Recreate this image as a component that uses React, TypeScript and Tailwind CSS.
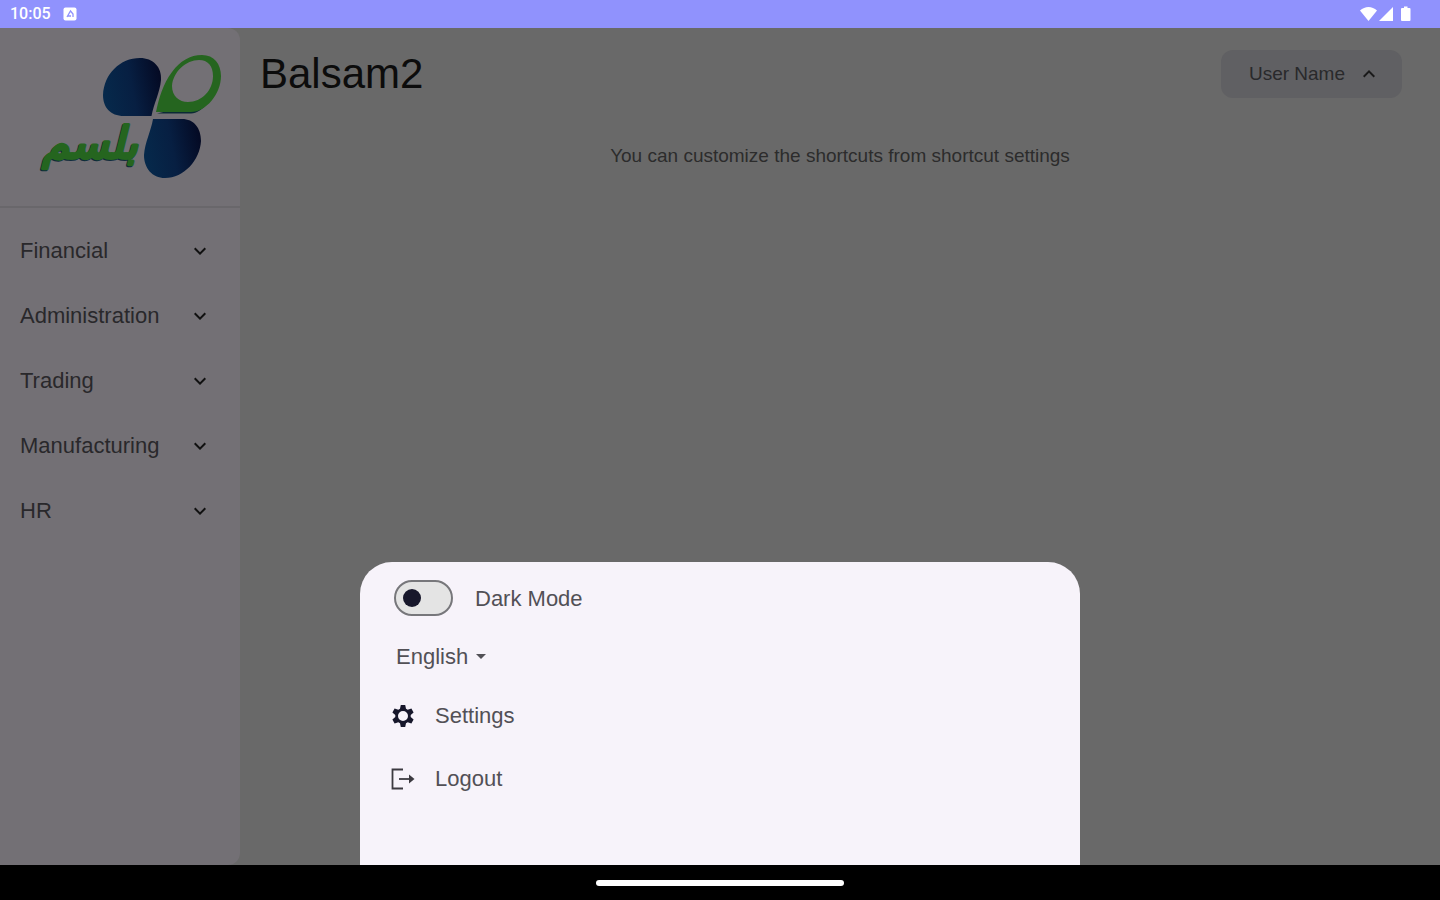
import * as React from 'react';
import { MdArrowDropDown, MdExpandLess, MdExpandMore } from 'react-icons/md';

const MENU = ['Financial', 'Administration', 'Trading', 'Manufacturing', 'HR'];

function StatusBar() {
  return (
    <div className="flex h-7 flex-none items-center bg-[#9092fd] pr-7 pl-2.5 text-white">
      <span className="font-[Roboto,sans-serif] text-base font-medium">10:05</span>
      <svg viewBox="0 0 14 14" className="ml-3 size-3.5" aria-hidden="true">
        <rect x="0.5" y="0.5" width="13" height="13" rx="2" fill="#fff" />
        <path d="M4 10 L7.5 4 L10 7 V10 M4.5 9 H8" fill="none" stroke="#9092fd" strokeWidth="1.3" />
      </svg>
      <svg viewBox="0 0 52 16" className="ml-auto h-4 w-[52px]" fill="#fff" aria-hidden="true">
        <path d="M0 4.5 C5 -0.2 12 -0.2 17 4.5 L8.5 15 Z" />
        <path d="M33 1 V15 H19 Z" />
        <path d="M42 2 h2 V0.5 h3.5 V2 h2 q1 0 1 1 V14 q0 1 -1 1 H42 q-1 0 -1 -1 V3 q0 -1 1 -1 Z" />
      </svg>
    </div>
  );
}

function Logo() {
  return (
    <svg viewBox="39 52 184 128" className="h-32 w-[184px]" role="img" aria-label="بلسم">
      <defs>
        <linearGradient id="leaf" x1="0" y1="0.6" x2="1" y2="0.4">
          <stop offset="0" stopColor="#06294b" />
          <stop offset="0.5" stopColor="#071f42" />
          <stop offset="1" stopColor="#040a24" />
        </linearGradient>
      </defs>
      <path
        d="M151.5 116 H124 C110 116 103 107 103 95 C104 74 120 58 140 58 C153 58 162 67 161 80 C160 92 154 103 151.5 116 Z"
        fill="url(#leaf)"
      />
      <path
        d="M153 119 H182 C194 119 201 128 201 141 C200 160 184 178 165 178 C152 178 144 168 144 155 C145 142 151 131 153 119 Z"
        fill="url(#leaf)"
      />
      <path d="M157 113.5 L191 113.5 C197 113 201 110 205 106 L180 108 Z" fill="#0a2a35" />
      <path
        fillRule="evenodd"
        fill="#25651f"
        d="M156 112 C159 98 163 84 172 72 C180 61 190 55 202 55 C214 55 221 64 221 76 C221 94 206 112 191 112 Z M199 60 C186 60 173 72 172 86 C172 96 179 102 188 102 C202 102 213 90 213 76 C213 66 208 60 199 60 Z"
      />
      <g
        direction="rtl"
        textAnchor="middle"
        strokeWidth="2"
        strokeLinejoin="round"
        className="font-['DejaVu_Sans',sans-serif] text-[44px] font-bold italic"
      >
        <text x="89" y="159" fill="#0d2a3c" stroke="#0d2a3c">بلسم</text>
        <text x="90" y="158" fill="#25651f" stroke="#25651f">بلسم</text>
      </g>
    </svg>
  );
}

function Sidebar() {
  return (
    <aside className="w-1/6 flex-none rounded-r-xl bg-[#737075]">
      <div className="flex h-[180px] justify-end border-b-2 border-[#69676b] pt-6 pr-[17px]">
        <Logo />
      </div>
      <nav className="flex flex-col pt-2.5">
        {MENU.map(name => (
          <button
            key={name}
            type="button"
            className="flex h-[65px] items-center justify-between pr-7 pl-5 text-left text-[22px] text-[#29282b]"
          >
            {name}
            <MdExpandMore className="size-6 text-[#111]" />
          </button>
        ))}
      </nav>
    </aside>
  );
}

function GearIcon() {
  return (
    <svg viewBox="0 0 24 24" className="size-6" fill="#17172b" aria-hidden="true">
      <path
        fillRule="evenodd"
        d="M9.800 1 h4.400 l.8 3.800 1.700 1 3.700 -1.200 2.200 3.800 -2.900 2.600 v2 l2.900 2.600 -2.200 3.800 -3.700 -1.200 -1.700 1 -.8 3.800 h-4.400 l-.8 -3.800 -1.700 -1 -3.700 1.200 -2.200 -3.800 2.900 -2.600 v-2 l-2.900 -2.600 2.200 -3.800 3.700 1.200 1.700 -1 Z M12 7 a5 5 0 1 0 0 10 a5 5 0 0 0 0 -10 Z"
      />
    </svg>
  );
}

function LogoutIcon() {
  return (
    <svg viewBox="0 0 24 24" className="size-6" fill="none" stroke="#3c3a40" strokeWidth="1.8" aria-hidden="true">
      <path d="M12 2.500 H1.500 V21.500 H12" />
      <path d="M8 12 H19" />
      <path d="M18 7.500 L23.500 12 L18 16.500 Z" fill="#3c3a40" stroke="none" />
    </svg>
  );
}

// Bottom sheet opened from the user button.
function UserSheet() {
  const [dark, setDark] = React.useState(false);
  const [lang, setLang] = React.useState('English');

  return (
    <div
      role="dialog"
      aria-label="User menu"
      className="absolute bottom-0 left-1/4 w-1/2 rounded-t-[32px] bg-[#f7f3fa] px-[31px] pt-[18px] pb-[55px] text-[22px] text-[#525056]"
    >
      <label className="flex h-9 w-fit items-center gap-[22px] pl-[3px]">
        <input
          type="checkbox"
          checked={dark}
          onChange={e => setDark(e.target.checked)}
          className="flex h-9 w-[59px] appearance-none items-center rounded-full border-2 border-[#77777b] bg-[#e4e4e4] px-[7px] before:size-[18px] before:rounded-full before:bg-[#17172b] before:content-[''] checked:justify-end"
        />
        Dark Mode
      </label>

      <div className="relative mt-5 flex h-10 w-fit items-center pl-[5px]">
        <select
          aria-label="Language"
          value={lang}
          onChange={e => setLang(e.target.value)}
          className="appearance-none bg-transparent pr-6"
        >
          <option>English</option>
          <option>العربية</option>
        </select>
        <MdArrowDropDown className="pointer-events-none absolute right-0 size-6" />
      </div>

      <button type="button" className="mt-2 flex h-[63px] items-center gap-5">
        <GearIcon />
        Settings
      </button>
      <button type="button" className="flex h-[63px] items-center gap-5">
        <LogoutIcon />
        Logout
      </button>
    </div>
  );
}

export default function App() {
  return (
    <div className="flex min-h-screen flex-col bg-black font-['Liberation_Sans',Arial,sans-serif]">
      <StatusBar />

      <div className="relative flex flex-1 overflow-hidden bg-[#696969]">
        <Sidebar />
        <main className="flex-1">
          <header className="flex items-center justify-between pt-[22px] pr-[38px] pl-5">
            <h1 className="text-[42px] leading-[48px] text-[#0c0c0c]">Balsam2</h1>
            <button
              type="button"
              className="flex h-12 items-center gap-3 rounded-xl bg-[#606063] pr-[21px] pl-7 text-[19px] text-[#29292b]"
            >
              User Name
              <MdExpandLess className="size-6 text-[#1a1a1a]" />
            </button>
          </header>
          <p className="mt-[46px] text-center text-[19px] leading-6 text-[#2c2c2c]">
            You can customize the shortcuts from shortcut settings
          </p>
        </main>
        <UserSheet />
      </div>

      <div className="flex h-[35px] flex-none items-center justify-center">
        <div className="h-1.5 w-[248px] rounded-full bg-white" />
      </div>
    </div>
  );
}
